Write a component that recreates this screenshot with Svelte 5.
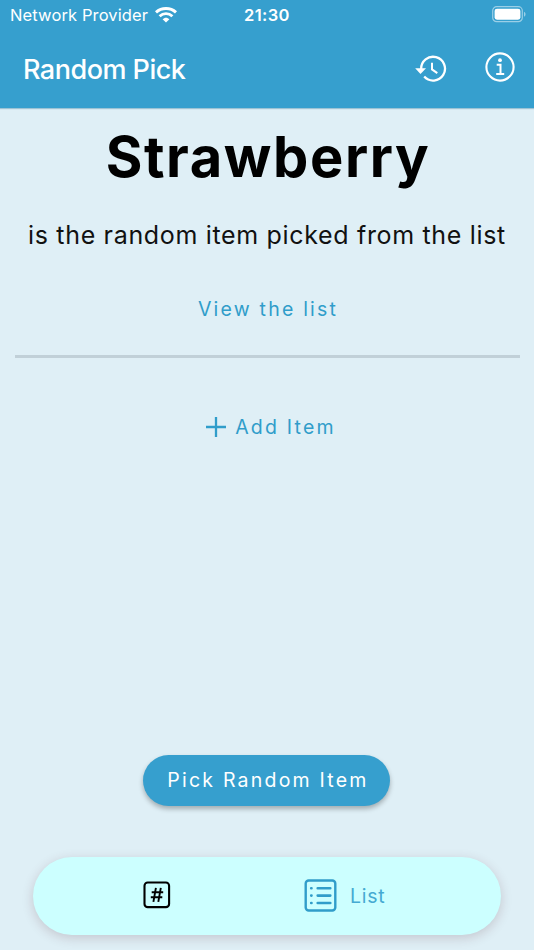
<script>
  let item = $state('Strawberry');
</script>

<div class="screen">
  <header>
    <div class="status">
      <span class="provider">Network Provider</span>
      <svg class="wifi" width="22" height="16" viewBox="0 0 22 16" fill="none" stroke="#fff">
        <path d="M1 5.4C6.7.3 15.3.3 21 5.4" stroke-width="3" />
        <path d="M4.6 9.2C8.3 5.8 13.7 5.8 17.4 9.2" stroke-width="2.9" />
        <path d="M7.6 12.3C9.6 10.2 12.4 10.2 14.4 12.3L11 15.6Z" fill="#fff" stroke="none" />
      </svg>
      <span class="time">21:30</span>
      <svg class="battery" width="34" height="17" viewBox="0 0 34 17">
        <rect x=".7" y=".7" width="29.6" height="15" rx="4" fill="none" stroke="#fff" stroke-opacity=".5" stroke-width="1.2" />
        <rect x="2.6" y="2.7" width="25.8" height="11" rx="2.4" fill="#fff" />
        <path d="M32 5.8c2 .8 2 4.2 0 5z" fill="#fff" fill-opacity=".5" />
      </svg>
    </div>
    <div class="bar">
      <span class="title">Random Pick</span>
      <svg class="history" width="32" height="28" viewBox="0 0 32 28" fill="none" stroke="#fff" stroke-width="2.3">
        <path d="M6.2 14.2A11.9 11.9 0 1 1 9.2 21.6" />
        <path d="M.2 13.2H11L5.5 19Z" fill="#fff" stroke="none" />
        <path d="M17 7.8V14.4L22.3 18.1" stroke-width="2" />
      </svg>
      <svg class="info" width="30" height="30" viewBox="0 0 30 30" fill="none" stroke="#fff">
        <circle cx="15" cy="15" r="13.6" stroke-width="2.1" />
        <circle cx="15" cy="8.2" r="1.9" fill="#fff" stroke="none" />
        <path d="M11.7 12.8H15.5V21.6M11.2 21.9H19.2" stroke-width="2" />
      </svg>
    </div>
  </header>

  <main>
    <h1>{item}</h1>
    <p>is the random item picked from the list</p>
    <button class="link view">View the list</button>
    <hr />
    <button class="link add">
      <svg width="20" height="20" viewBox="0 0 20 20" stroke="#309dca" stroke-width="2.3"><path d="M10 0V20M0 10H20" /></svg>
      <span>Add Item</span>
    </button>
  </main>

  <button class="pick">Pick Random Item</button>

  <nav>
    <svg class="hash" width="28" height="28" viewBox="0 0 28 28" fill="none" stroke="#000">
      <rect x="1.5" y="1.5" width="24.6" height="24.6" rx="3.2" stroke-width="2.1" />
      <path d="M12.9 6.9L10.4 20.9M17.8 6.9L15.3 20.9M8.7 11.2H20.2M7.8 16.3H19.3" stroke-width="1.9" />
    </svg>
    <svg class="listicon" width="33" height="33" viewBox="0 0 33 33" fill="none" stroke="#309dca">
      <rect x="1.7" y="1.5" width="29.6" height="30" rx="3" stroke-width="2.4" />
      <path d="M13.7 9.2H26.3M13.7 16.6H26.3M13.7 24H26.3" stroke-width="2.6" stroke-linecap="round" />
      <path d="M7.2 9.2H7.5M7.2 16.6H7.5M7.2 24H7.5" stroke-width="2.6" stroke-linecap="round" />
    </svg>
    <span class="label">List</span>
  </nav>
</div>

<style>
  .screen {
    width: 534px;
    height: 950px;
    overflow: hidden;
    display: flex;
    flex-direction: column;
    background: #dfeff6;
    font-family: Inter, "Liberation Sans", sans-serif;
    white-space: nowrap;
  }
  svg { display: block; flex: none; }
  button { border: 0; margin: 0; padding: 0; background: none; font-family: inherit; }
  header { flex: none; height: 108px; background: #369fce; color: #fff; box-shadow: 0 1px 1px rgba(54, 130, 165, .4); }
  .status { display: flex; height: 30px; align-items: center; }
  .provider { width: 145px; margin-left: 10px; font-size: 16.5px; letter-spacing: .12px; line-height: 30px; }
  .wifi { margin-top: -1px; }
  .time { width: 248px; margin-left: 67px; font-size: 16.5px; font-weight: 600; letter-spacing: .4px; }
  .battery { margin-top: -1px; }
  .bar { display: flex; height: 78px; align-items: center; }
  .title { width: 392px; margin-left: 23px; font-size: 27px; font-weight: 500; letter-spacing: -.5px; }
  .info { margin: -4px 0 0 38px; }
  main { display: flex; flex-direction: column; align-items: center; }
  h1 { margin: 14px 0 0; font-size: 56px; line-height: 70px; font-weight: 700; letter-spacing: 1.6px; padding-left: 2px; color: #000; }
  p { margin: 27px 0 0; font-size: 25px; line-height: 32px; letter-spacing: .67px; color: #111; }
  .link { color: #309dca; font-size: 19.5px; line-height: 24px; letter-spacing: 2.2px; }
  .view { margin-top: 46px; padding-left: 2px; }
  hr { width: 505px; height: 3px; margin: 34px 0 0; border: 0; background: #c1d0d8; }
  .add { display: flex; align-items: center; gap: 9px; margin-top: 57px; padding-left: 8px; }
  .pick {
    flex: none;
    align-self: center;
    width: 247px;
    height: 51px;
    margin: 316px 1px 0 0;
    padding: 0 0 2px 3px;
    border-radius: 26px;
    background: #369fce;
    color: #fff;
    font-size: 19.5px;
    letter-spacing: 2.22px;
    box-shadow: 0 3px 5px rgba(0, 0, 0, .28);
  }
  nav {
    flex: none;
    display: flex;
    align-items: center;
    align-self: center;
    width: 468px;
    height: 78px;
    margin-top: 51px;
    border-radius: 39px;
    background: #cff;
    box-shadow: 0 3px 12px rgba(90, 40, 50, .2);
  }
  .hash { margin: -2px 0 0 110px; }
  .listicon { margin: -2px 0 0 133px; }
  .label { margin-left: 13px; font-size: 19.5px; font-weight: 400; letter-spacing: .7px; color: #45aad2; }
</style>
